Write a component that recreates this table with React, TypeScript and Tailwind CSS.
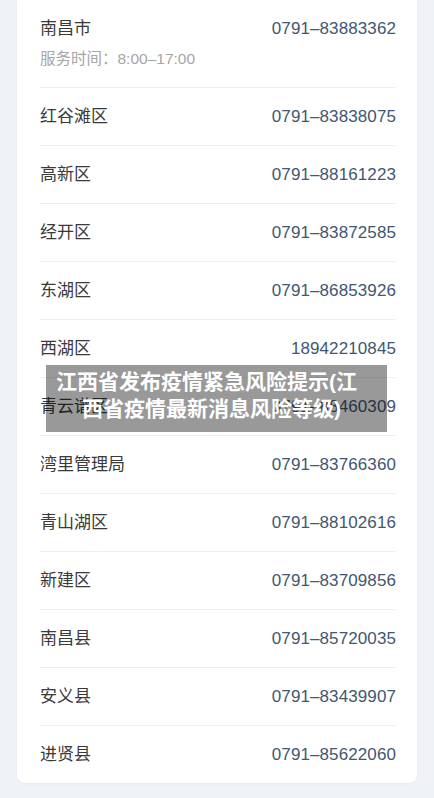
import React from 'react';

interface Hotline {
  name: string;
  phone: string;
}

const rows: Hotline[] = [
  { name: '红谷滩区', phone: '0791–83838075' },
  { name: '高新区', phone: '0791–88161223' },
  { name: '经开区', phone: '0791–83872585' },
  { name: '东湖区', phone: '0791–86853926' },
  { name: '西湖区', phone: '18942210845' },
  { name: '青云谱区', phone: '0791–88460309' },
  { name: '湾里管理局', phone: '0791–83766360' },
  { name: '青山湖区', phone: '0791–88102616' },
  { name: '新建区', phone: '0791–83709856' },
  { name: '南昌县', phone: '0791–85720035' },
  { name: '安义县', phone: '0791–83439907' },
  { name: '进贤县', phone: '0791–85622060' },
];

const font = { fontFamily: '"Liberation Sans", "Noto Sans CJK SC", sans-serif' };

const App = () => {
  return (
    <div className="relative min-h-[798px] w-[434px] bg-[#eff2f7] pb-4" style={font}>
      <div className="mx-[17px] rounded-b-[8px] bg-white pl-[23px] pr-[21px] shadow-[0_1px_3px_rgba(0,0,0,0.04)]">
        {/* first row has the service hours under it */}
        <div className="h-[88px] border-b border-[#efefef] pt-[17px]">
          <div className="flex items-center justify-between leading-[24px]">
            <span className="text-[17px] text-[#3a3a3a]">南昌市</span>
            <span className="text-[17px] tracking-[0.1px] text-[#415772]">0791–83883362</span>
          </div>
          <div className="mt-[7px] text-[15.5px] leading-[22px] text-[#a5a5a5]">服务时间：8:00–17:00</div>
        </div>

        {rows.map((row, idx) => (
          <div
            key={row.name}
            className={
              idx === rows.length - 1
                ? 'flex h-[57px] items-center justify-between'
                : 'flex h-[58px] items-center justify-between border-b border-[#efefef]'
            }
          >
            <span className="text-[17px] leading-[24px] text-[#3a3a3a]">{row.name}</span>
            <span className="text-[17px] leading-[24px] tracking-[0.1px] text-[#415772]">{row.phone}</span>
          </div>
        ))}
      </div>

      {/* title banner laid over the list */}
      <div className="absolute left-[46px] top-[365px] h-[67px] w-[341px] bg-[rgba(0,0,0,0.4)] pt-[3px] text-[21px] font-bold leading-[27px] text-white">
        <div className="pl-[10px]">江西省发布疫情紧急风险提示(江</div>
        <div className="pl-[36px]">西省疫情最新消息风险等级)</div>
      </div>
    </div>
  );
};

export default App;
